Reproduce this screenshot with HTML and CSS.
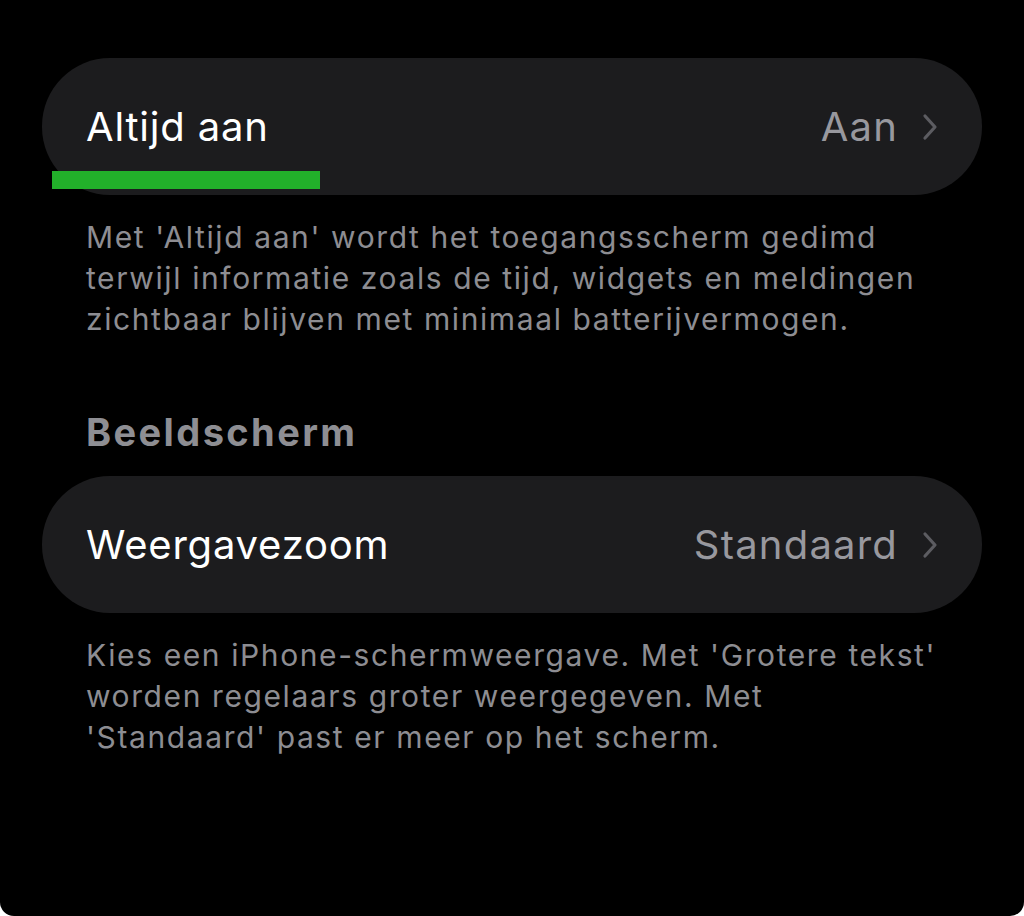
FILE: index.html
```html
<!DOCTYPE html>
<html lang="nl">
<head>
    <meta charset="UTF-8">
    <meta name="viewport" content="width=device-width, initial-scale=1.0">
    <link rel="stylesheet" href="styles.css">
    <title>Beeldscherm en helderheid</title>
</head>
<body>

    <div class="screen">
        <div class="row">
            <span class="label">Altijd aan</span>
            <span class="value">Aan</span>
            <svg class="chevron" width="16" height="28" viewBox="0 0 16 28">
                <polyline points="3,3 13,14 3,25" />
            </svg>
            <div class="marker"></div>
        </div>
        <p class="note">Met 'Altijd aan' wordt het toegangsscherm gedimd terwijl informatie zoals de tijd, widgets en meldingen zichtbaar blijven met minimaal batterijvermogen.</p>

        <h2 class="section">Beeldscherm</h2>
        <div class="row">
            <span class="label">Weergavezoom</span>
            <span class="value">Standaard</span>
            <svg class="chevron" width="16" height="28" viewBox="0 0 16 28">
                <polyline points="3,3 13,14 3,25" />
            </svg>
        </div>
        <p class="note">Kies een iPhone-schermweergave. Met 'Grotere tekst' worden regelaars groter weergegeven. Met 'Standaard' past er meer op het scherm.</p>
    </div>

</body>
</html>
```

FILE: styles.css
```css
html {
    background-color: #fff;
}

body {
    margin: 0;
    font-family: Inter, "Open Sans", sans-serif;
}

.screen {
    background-color: #000;
    height: 916px;
    box-sizing: border-box;
    padding: 58px 42px 0 42px;
    border-radius: 0 0 14px 14px;
}

.row {
    position: relative;
    display: flex;
    align-items: center;
    height: 137px;
    padding: 0 44px;
    background-color: #1c1c1e;
    border-radius: 68px;
}

.label {
    flex: 1;
    color: #fff;
    font-size: 40px;
    letter-spacing: 0.8px;
}

.value {
    color: #98989e;
    font-size: 40px;
    letter-spacing: 1.2px;
}

.chevron {
    margin-left: 24px;
    fill: none;
    stroke: #5c5c61;
    stroke-width: 3.2;
    stroke-linecap: round;
    stroke-linejoin: round;
}

.marker {
    position: absolute;
    left: 10px;
    top: 113px;
    width: 268px;
    height: 18px;
    background-color: #22b02a;
}

.note {
    margin: 22px 0 0 0;
    padding: 0 28px 0 44px;
    color: #8d8d92;
    font-size: 30px;
    line-height: 41px;
    letter-spacing: 1.6px;
}

.section {
    margin: 70px 0 22px 0;
    padding: 0 44px;
    color: #8e8e93;
    font-size: 38px;
    line-height: 44px;
    font-weight: 700;
    letter-spacing: 2.4px;
}
```
